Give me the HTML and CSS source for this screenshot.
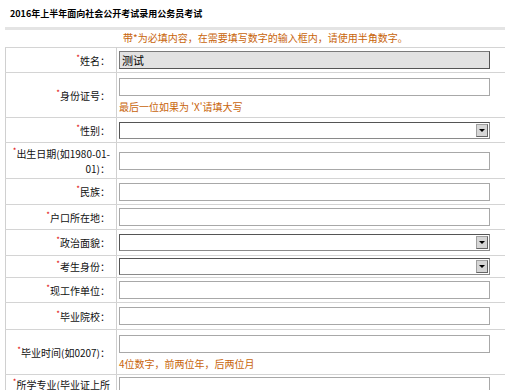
FILE: index.html
```html
<!DOCTYPE html>
<html lang="zh-CN">

<head>
    <meta charset="UTF-8">
    <meta name="viewport" content="width=device-width, initial-scale=1.0">
    <title>报名信息</title>
    <link rel="stylesheet" href="styles.css">
</head>

<body>
    <div class="page">
        <h1 class="title">2016年上半年面向社会公开考试录用公务员考试</h1>
        <div class="bar"></div>
        <p class="notice">带*为必填内容，在需要填写数字的输入框内，请使用半角数字。</p>

        <table class="form">
            <tr class="r25">
                <td class="label"><span class="req">*</span>姓名：</td>
                <td class="field"><input type="text" class="txt readonly" value="测试" readonly></td>
            </tr>
            <tr class="r45">
                <td class="label"><span class="req">*</span>身份证号：</td>
                <td class="field">
                    <input type="text" class="txt">
                    <div class="hint">最后一位如果为 'X'请填大写</div>
                </td>
            </tr>
            <tr class="r25">
                <td class="label"><span class="req">*</span>性别：</td>
                <td class="field"><div class="sel"><span class="arrow"></span></div></td>
            </tr>
            <tr class="r36">
                <td class="label"><span class="req">*</span>出生日期(如1980-01-<br>01)：</td>
                <td class="field"><input type="text" class="txt"></td>
            </tr>
            <tr class="r26">
                <td class="label"><span class="req">*</span>民族：</td>
                <td class="field"><input type="text" class="txt"></td>
            </tr>
            <tr class="r25">
                <td class="label"><span class="req">*</span>户口所在地：</td>
                <td class="field"><input type="text" class="txt"></td>
            </tr>
            <tr class="r26">
                <td class="label"><span class="req">*</span>政治面貌：</td>
                <td class="field"><div class="sel"><span class="arrow"></span></div></td>
            </tr>
            <tr class="r22">
                <td class="label"><span class="req">*</span>考生身份：</td>
                <td class="field"><div class="sel"><span class="arrow"></span></div></td>
            </tr>
            <tr class="r25">
                <td class="label"><span class="req">*</span>现工作单位：</td>
                <td class="field"><input type="text" class="txt"></td>
            </tr>
            <tr class="r27">
                <td class="label"><span class="req">*</span>毕业院校：</td>
                <td class="field"><input type="text" class="txt"></td>
            </tr>
            <tr class="r45">
                <td class="label"><span class="req">*</span>毕业时间(如0207)：</td>
                <td class="field">
                    <input type="text" class="txt">
                    <div class="hint">4位数字，前两位年，后两位月</div>
                </td>
            </tr>
            <tr class="r36">
                <td class="label top"><span class="req">*</span>所学专业(毕业证上所学专业)：</td>
                <td class="field top"><input type="text" class="txt"></td>
            </tr>
        </table>
    </div>
</body>

</html>
```

FILE: styles.css
```css
* {
    margin: 0;
    padding: 0;
    box-sizing: border-box;
}

body {
    background-color: #fff;
    font-family: "Noto Sans CJK SC", "Liberation Sans", sans-serif;
    font-size: 10px;
    color: #111;
    overflow: hidden;
}

.page {
    width: 505px;
    padding-top: 8px;
}

.title {
    font-size: 9px;
    font-weight: bold;
    line-height: 12px;
    padding-left: 10px;
    color: #000;
}

.bar {
    margin: 7px 0 0 5px;
    width: 500px;
    height: 3px;
    background-color: #e4e4e4;
}

.notice {
    color: #c8640a;
    line-height: 16px;
    height: 17px;
    padding-left: 123px;
}

.form {
    margin-left: 5px;
    width: 500px;
    border-collapse: collapse;
    border-left: 1px solid #d0d0d0;
}

.form td {
    border-top: 1px solid #d4d4d4;
    border-bottom: 1px solid #d4d4d4;
    vertical-align: middle;
    padding: 0;
}

.label {
    width: 111px;
    text-align: right;
    padding-right: 6px !important;
    padding-left: 4px !important;
    line-height: 15px;
    border-right: 1px solid #d0d0d0;
}

.field {
    padding-left: 2px !important;
}

.top {
    vertical-align: top !important;
    padding-top: 2px !important;
}

.req {
    color: #e00000;
    font-size: 8px;
    line-height: 10px;
    vertical-align: top;
}

.r22 { height: 22px; }
.r25 { height: 25px; }
.r26 { height: 26px; }
.r27 { height: 27px; }
.r36 { height: 36px; }
.r45 { height: 45px; }

.txt {
    display: block;
    width: 371px;
    height: 18px;
    border: 1px solid #a8a8a8;
    background-color: #fff;
    font-family: inherit;
    font-size: 11px;
    padding-left: 2px;
    outline: none;
}

.readonly {
    background-color: #e2e2e2;
    border: 1px solid #7a7a7a;
    border-right-color: #555;
    border-bottom-color: #555;
}

.hint {
    color: #c8640a;
    margin-top: 5px;
    line-height: 12px;
}

.sel {
    position: relative;
    width: 371px;
    height: 17px;
    border: 1px solid #8a8a8a;
    border-top-color: #555;
    border-left-color: #555;
    background-color: #fff;
}

.arrow {
    position: absolute;
    right: 1px;
    top: 1px;
    width: 12px;
    height: 13px;
    background-color: #d6d6d6;
    border: 1px solid #a0a0a0;
    border-right-color: #666;
    border-bottom-color: #666;
}

.arrow::after {
    content: "";
    position: absolute;
    left: 2px;
    top: 4px;
    border-left: 3px solid transparent;
    border-right: 3px solid transparent;
    border-top: 3px solid #000;
}
```
